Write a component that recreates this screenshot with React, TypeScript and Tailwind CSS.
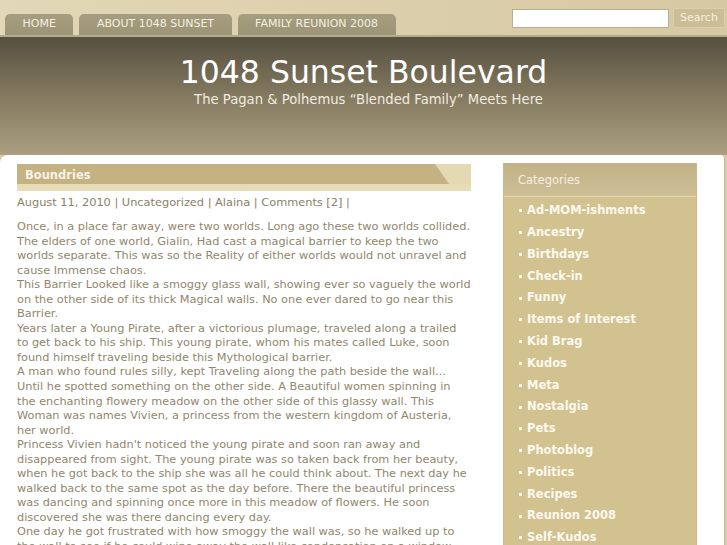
const categories = [
  "Ad-MOM-ishments",
  "Ancestry",
  "Birthdays",
  "Check-in",
  "Funny",
  "Items of Interest",
  "Kid Brag",
  "Kudos",
  "Meta",
  "Nostalgia",
  "Pets",
  "Photoblog",
  "Politics",
  "Recipes",
  "Reunion 2008",
  "Self-Kudos",
];

const paragraphs = [
  "Once, in a place far away, were two worlds. Long ago these two worlds collided. The elders of one world, Gialin, Had cast a magical barrier to keep the two worlds separate. This was so the Reality of either worlds would not unravel and cause Immense chaos.",
  "This Barrier Looked like a smoggy glass wall, showing ever so vaguely the world on the other side of its thick Magical walls. No one ever dared to go near this Barrier.",
  "Years later a Young Pirate, after a victorious plumage, traveled along a trailed to get back to his ship. This young pirate, whom his mates called Luke, soon found himself traveling beside this Mythological barrier.",
  "A man who found rules silly, kept Traveling along the path beside the wall... Until he spotted something on the other side. A Beautiful women spinning in the enchanting flowery meadow on the other side of this glassy wall. This Woman was names Vivien, a princess from the western kingdom of Austeria, her world.",
  "Princess Vivien hadn't noticed the young pirate and soon ran away and disappeared from sight. The young pirate was so taken back from her beauty, when he got back to the ship she was all he could think about. The next day he walked back to the same spot as the day before. There the beautiful princess was dancing and spinning once more in this meadow of flowers. He soon discovered she was there dancing every day.",
  "One day he got frustrated with how smoggy the wall was, so he walked up to the wall to see if he could wipe away the wall like condensation on a window.",
];

const tabs = ["HOME", "ABOUT 1048 SUNSET", "FAMILY REUNION 2008"];

export default function App() {
  return (
    <div className="h-[545px] w-[727px] overflow-hidden bg-[#d8cba6] font-['DejaVu_Sans',sans-serif]">
      {/* top bar */}
      <div className="flex h-[35px] items-end justify-between bg-gradient-to-r from-[#e2d7b6] to-[#d6c8a2] pl-[5px] pr-[2px]">
        <div className="flex gap-[6px]">
          {tabs.map((t) => (
            <div
              key={t}
              className="flex h-[21px] items-center rounded-t-[5px] bg-gradient-to-b from-[#a69e80] to-[#9c9475] px-[17.5px] text-[11px] text-[#f4efe2]"
            >
              {t}
            </div>
          ))}
        </div>
        <div className="mb-[6px] mt-[8px] flex items-center gap-[4px] self-start">
          <input className="h-[19px] w-[157px] border border-[#b9ae8e] bg-white" />
          <div className="flex h-[20px] w-[52px] items-center justify-center border border-[#d9cfb0] bg-[#cbbd95] text-[11px] text-[#f5f0e2]">
            Search
          </div>
        </div>
      </div>

      {/* header */}
      <div className="h-[120px] border-t-[2px] border-[#b5aa8a] bg-gradient-to-b from-[#575040] via-[#847a60] to-[#ab9f80] text-center text-white">
        <div className="pt-[15px] text-[31.5px] leading-[40px]">1048 Sunset Boulevard</div>
        <div className="ml-[10px] text-[13.2px] leading-[16px] text-[#f1ece0]">
          The Pagan &amp; Polhemus “Blended Family” Meets Here
        </div>
      </div>

      {/* content box */}
      <div className="mr-[2px] flex gap-[32px] rounded-tl-[8px] rounded-tr-[4px] border-r border-[#c8bc98] bg-white pl-[17px] pt-[8px]">
        <div className="w-[454px] pt-[1px]">
          <div className="relative h-[27px] bg-[#e4d9b3]">
            <div
              className="absolute inset-y-0 left-0 w-[432px] bg-[#c4b283]"
              style={{ clipPath: "polygon(0 0, 418px 0, 432px 20px, 0 20px)" }}
            />
            <div className="absolute inset-x-0 bottom-0 h-[7px] bg-[#e6dcb8]" />
            <div className="relative pl-[8px] pt-[4px] text-[11.5px] font-bold leading-[14px] text-[#f7f2e3]">
              Boundries
            </div>
          </div>
          <div className="mt-[3px] text-[11.35px] leading-[16px] text-[#8a8268]">
            August 11, 2010 | Uncategorized | Alaina | Comments [2] |
          </div>
          <div className="mt-[10px] text-[11.3px] leading-[14.55px] text-[#8f876c]">
            {paragraphs.map((p, i) => (
              <p key={i}>{p}</p>
            ))}
          </div>
        </div>

        <div className="h-[400px] w-[194px] border-x border-[#c9b98a] bg-[#d2c290]">
          <div className="h-[34px] border-b border-[#e3d7b0] bg-gradient-to-b from-[#c2b287] to-[#cdbe96] pl-[14px] pt-[9px] text-[11.5px] text-[#f4efe2]">
            Categories
          </div>
          <ul className="pt-[3px] text-[11.5px] font-bold text-[#fbf8ef]">
            {categories.map((c) => (
              <li key={c} className="flex h-[21.8px] items-center pl-[15px]">
                <span className="mr-[5px] h-[3px] w-[3px] bg-[#fbf8ef]" />
                {c}
              </li>
            ))}
          </ul>
        </div>
      </div>
    </div>
  );
}
